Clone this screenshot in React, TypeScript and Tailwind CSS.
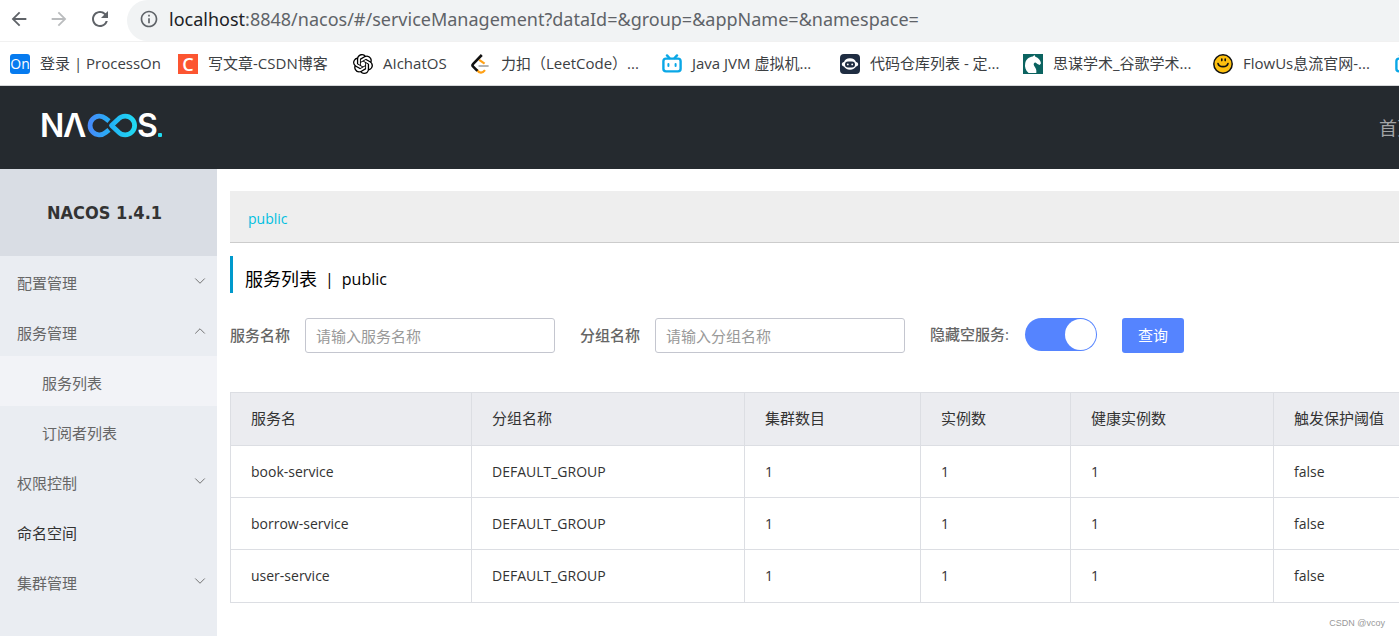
import React, { useState } from 'react';
import { ChevronDown, ChevronUp } from 'lucide-react';
import { MdArrowBack, MdArrowForward, MdRefresh, MdInfoOutline } from 'react-icons/md';
import { SiOpenai } from 'react-icons/si';

interface Service {
	name: string;
	groupName: string;
	clusterCount: number;
	ipCount: number;
	healthyInstanceCount: number;
	triggerFlag: string;
}

interface MenuItem {
	label: string;
	open?: boolean;
	link?: boolean;
	children?: string[];
}

const services: Service[] = [
	{ name: 'book-service', groupName: 'DEFAULT_GROUP', clusterCount: 1, ipCount: 1, healthyInstanceCount: 1, triggerFlag: 'false' },
	{ name: 'borrow-service', groupName: 'DEFAULT_GROUP', clusterCount: 1, ipCount: 1, healthyInstanceCount: 1, triggerFlag: 'false' },
	{ name: 'user-service', groupName: 'DEFAULT_GROUP', clusterCount: 1, ipCount: 1, healthyInstanceCount: 1, triggerFlag: 'false' }
];

const menu: MenuItem[] = [
	{ label: '配置管理' },
	{ label: '服务管理', open: true, children: ['服务列表', '订阅者列表'] },
	{ label: '权限控制' },
	{ label: '命名空间', link: true },
	{ label: '集群管理' }
];

const columns = [
	{ title: '服务名', width: 'w-[241px]' },
	{ title: '分组名称', width: 'w-[273px]' },
	{ title: '集群数目', width: 'w-[176px]' },
	{ title: '实例数', width: 'w-[150px]' },
	{ title: '健康实例数', width: 'w-[203px]' },
	{ title: '触发保护阈值', width: 'w-[240px]' }
];

const BilibiliIcon = () => (
	<svg viewBox="0 0 20 20" className="size-5 shrink-0" fill="none" stroke="#0aa7e6" strokeWidth="2.4" strokeLinecap="round">
		<rect x="1.4" y="4.6" width="17.2" height="12.8" rx="2.6" />
		<path d="M5 1.4l2.4 2.6M15 1.400l-2.400 2.600" />
		<path d="M6.4 10v2M13.6 10v2" strokeWidth="2" />
	</svg>
);

const LeetCodeIcon = () => (
	<svg viewBox="0 0 20 20" className="size-5 shrink-0" fill="none" strokeWidth="2.2">
		<path d="M8.200 5.800L13.600 9.600" stroke="#ffa116" />
		<path d="M5.800 15.600c2.400 4 5.600 4 8.200.6" stroke="#ffa116" />
		<path d="M8.400 12h8.400" stroke="#b3b3b3" strokeLinecap="round" />
		<path d="M10.800 1L2.200 9.800c-.9.900-.9 2 0 2.900l4.200 4.200" stroke="#111" strokeWidth="2.600" />
	</svg>
);

const RobotIcon = () => (
	<svg viewBox="0 0 20 20" className="size-5 shrink-0">
		<rect width="20" height="20" rx="4" fill="#1f2d42" />
		<path d="M10 4.200c3.200 0 5.300 1.500 6 3.700 1.300.3 2.200 1.200 2.200 2.300s-.9 2.100-2.200 2.400c-1 2-3.200 3.200-6 3.200s-5-1.200-6-3.200c-1.300-.3-2.200-1.300-2.200-2.400s.9-2 2.200-2.300c.7-2.200 2.800-3.700 6-3.700z" fill="#fff" />
		<rect x="5" y="7.600" width="10" height="6" rx="3" fill="#1f2d42" />
		<circle cx="7.800" cy="10.400" r=".9" fill="#fff" />
		<circle cx="12.200" cy="10.400" r=".9" fill="#fff" />
	</svg>
);

const HorseIcon = () => (
	<svg viewBox="0 0 20 20" className="size-5 shrink-0">
		<rect width="20" height="20" fill="#0b6360" />
		<path d="M11.400 1l1 1.700c3 .9 5 3.400 5.600 6.600l-1.300 1.700-2.200-.9-2-1.600c-1.600.2-2.300 1.700-1.400 3.200 1.600 2.300 2.700 4 2.200 7.300H5.600C2.600 16.500 1.400 12.800 2.200 9.200 3.100 5.400 6 2.900 9.800 2.500z" fill="#fff" />
	</svg>
);

const SmileIcon = () => (
	<svg viewBox="0 0 20 20" className="size-5 shrink-0" fill="none" stroke="#111" strokeLinecap="round">
		<circle cx="10" cy="10" r="9.200" fill="#fdc00f" strokeWidth="1.500" />
		<path d="M5 9.500c1 4.200 9 4.200 10 0" strokeWidth="1.600" />
		<path d="M8.800 5v1.600M12.200 5v1.600" strokeWidth="1.600" />
	</svg>
);

const ProcessOnIcon = () => (
	<span className="flex size-5 shrink-0 items-center justify-center rounded-[3px] bg-[#067bef] text-sm font-medium text-white">On</span>
);

const CsdnIcon = () => (
	<span className="flex size-5 shrink-0 items-center justify-center bg-[#fc5531] text-lg font-semibold text-white">C</span>
);

const bookmarks = [
	{ title: '登录 | ProcessOn', width: 'w-[148px]', icon: <ProcessOnIcon /> },
	{ title: '写文章-CSDN博客', width: 'w-[155px]', icon: <CsdnIcon /> },
	{ title: 'AIchatOS', width: 'w-[98px]', icon: <SiOpenai className="size-5 shrink-0 text-black" /> },
	{ title: '力扣（LeetCode）...', width: 'w-[171px]', icon: <LeetCodeIcon /> },
	{ title: 'Java JVM 虚拟机...', width: 'w-[158px]', icon: <BilibiliIcon /> },
	{ title: '代码仓库列表 - 定...', width: 'w-[163px]', icon: <RobotIcon /> },
	{ title: '思谋学术_谷歌学术...', width: 'w-[170px]', icon: <HorseIcon /> },
	{ title: 'FlowUs息流官网-...', width: 'w-[162px]', icon: <SmileIcon /> },
	{ title: '', width: 'w-5', icon: <BilibiliIcon /> }
];

const NacosLogo = () => (
	<svg width="134" height="50" viewBox="-6 -11 134 50" role="img" aria-label="NACOS">
		<defs>
			<linearGradient id="loop" gradientUnits="userSpaceOnUse" x1="45" y1="0" x2="95" y2="0">
				<stop offset="0" stopColor="#4a86fb" />
				<stop offset="0.5" stopColor="#22b4f5" />
				<stop offset="1" stopColor="#20dcf2" />
			</linearGradient>
		</defs>
		<g fill="#fff" fontFamily="Inter, sans-serif" fontSize="32" fontWeight="600">
			<text x="-2" y="23">N</text>
			<text x="21" y="23">Λ</text>
			<text x="95" y="23">S</text>
		</g>
		<g fill="none" stroke="url(#loop)" strokeWidth="4.800">
			<path d="M67 7.200L63.500 4.300A9.400 9.400 0 1 0 63.500 18.700L67 15.800" />
			<path d="M69.500 11.500L76.500 4.900A9.400 9.400 0 1 1 76.500 18.100Z" strokeLinejoin="round" />
		</g>
		<rect x="116" y="19" width="4" height="4" rx="1" fill="#20dcf2" />
	</svg>
);

const BrowserBar = () => (
	<div className="overflow-hidden border-b border-[#d5d7d9] bg-white text-[#3c4043]">
		<div className="flex h-[42px] items-start border-b border-[#f1f1f1]">
			<div className="flex h-[38px] w-[127px] shrink-0 items-center gap-[18px] pl-2">
				<button type="button" aria-label="Back"><MdArrowBack className="size-[22px] text-[#5f6368]" /></button>
				<button type="button" aria-label="Forward"><MdArrowForward className="size-[22px] text-[#babcbe]" /></button>
				<button type="button" aria-label="Reload"><MdRefresh className="size-6 text-[#5f6368]" /></button>
			</div>
			<div className="flex h-[41px] flex-1 items-center gap-2.5 rounded-l-full bg-[#f1f3f4] pb-[3px] pl-3 text-lg whitespace-nowrap">
				<MdInfoOutline className="size-5 shrink-0 text-[#5f6368]" />
				<span className="font-['Noto_Sans',sans-serif] text-[#5f6368]">
					<span className="text-[#202124]">localhost</span>:8848/nacos/#/serviceManagement?dataId=&amp;group=&amp;appName=&amp;namespace=
				</span>
			</div>
		</div>
		<nav className="flex h-[43px] items-center gap-5 pl-2.5 text-[15px] whitespace-nowrap">
			{bookmarks.map((item, i) => (
				<a key={i} href="#" className={`flex shrink-0 items-center gap-2.5 ${item.width}`}>
					{item.icon}
					<span>{item.title}</span>
				</a>
			))}
		</nav>
	</div>
);

const Sidebar = () => (
	<aside className="w-[217px] shrink-0 bg-[#eaedf2] text-[15px] text-[#666]">
		<h1 className="flex h-[87px] items-center justify-center bg-[#d9dde4] pr-2 font-['DejaVu_Sans_Condensed','DejaVu_Sans',sans-serif] text-lg font-bold text-[#333]">NACOS 1.4.1</h1>
		<ul className="leading-[54px]">
			{menu.map((item) => (
				<li key={item.label}>
					{item.link ? (
						<a href="#" className="block h-[50px] pl-[17px] text-[#333]">{item.label}</a>
					) : (
						<button type="button" className="flex h-[50px] w-full items-start justify-between pr-2 pl-[17px]">
							<span>{item.label}</span>
							{item.open ? <ChevronUp className="mt-4 size-[18px]" strokeWidth={1.2} /> : <ChevronDown className="mt-4 size-[18px]" strokeWidth={1.2} />}
						</button>
					)}
					{item.children && (
						<ul>
							{item.children.map((child, i) => (
								<li key={child}>
									<a href="#" className={`block h-[50px] pl-[42px] ${i === 0 ? 'bg-[#f2f3f7]' : ''}`}>{child}</a>
								</li>
							))}
						</ul>
					)}
				</li>
			))}
		</ul>
	</aside>
);

const App = () => {
	const [serviceName, setServiceName] = useState('');
	const [groupName, setGroupName] = useState('');
	const [hideEmpty, setHideEmpty] = useState(true);

	return (
		<div className="relative flex min-h-screen flex-col overflow-hidden bg-white font-['Open_Sans','Noto_Sans_CJK_SC',sans-serif]">
			<BrowserBar />

			<header className="flex h-[83px] items-center justify-between bg-[#252a2f] pl-9">
				<NacosLogo />
				<nav className="w-5 overflow-hidden text-lg whitespace-nowrap text-[#a3a5a7]">
					<a href="#">首页</a>
				</nav>
			</header>

			<div className="flex flex-1">
				<Sidebar />
				<main className="min-w-0 flex-1 overflow-hidden pt-[22px] pl-[13px]">
					<div className="flex h-[52px] items-center border-b border-[#ccc] bg-[#eee] pt-1 pl-[18px] text-sm text-[#00bfe0]">
						<a href="#">public</a>
					</div>

					<h2 className="mt-[13px] flex h-[37px] items-center gap-2 border-l-3 border-[#09c] pt-2 pl-3 text-base whitespace-nowrap text-black">
						<span className="text-lg">服务列表</span>
						<span>|</span>
						<span>public</span>
					</h2>

					{/* Search form */}
					<form onSubmit={(e) => e.preventDefault()} className="mt-[25px] flex items-center gap-[25px] text-[15px] whitespace-nowrap text-[#666]">
						<div className="flex items-center gap-[15px]">
							<label htmlFor="serviceName" className="font-medium">服务名称</label>
							<input
								id="serviceName"
								type="text"
								value={serviceName}
								onChange={(e) => setServiceName(e.target.value)}
								placeholder="请输入服务名称"
								className="h-[35px] w-[250px] rounded-[3px] border border-[#c4c6cf] px-2.5 placeholder:text-[#999]"
							/>
						</div>
						<div className="flex items-center gap-[15px]">
							<label htmlFor="groupName" className="font-medium">分组名称</label>
							<input
								id="groupName"
								type="text"
								value={groupName}
								onChange={(e) => setGroupName(e.target.value)}
								placeholder="请输入分组名称"
								className="h-[35px] w-[250px] rounded-[3px] border border-[#c4c6cf] px-2.5 placeholder:text-[#999]"
							/>
						</div>
						<div className="flex items-center gap-4 self-start">
							<label htmlFor="hideEmpty" className="font-medium">隐藏空服务:</label>
							<input
								id="hideEmpty"
								type="checkbox"
								role="switch"
								checked={hideEmpty}
								onChange={(e) => setHideEmpty(e.target.checked)}
								className="flex h-[33px] w-[72px] appearance-none justify-start rounded-full bg-[#c4c6cf] p-px before:size-[31px] before:rounded-full before:bg-white checked:justify-end checked:bg-[#5584ff]"
							/>
						</div>
						<button type="submit" className="h-[35px] rounded-[3px] bg-[#5584ff] px-4 text-white">查询</button>
					</form>

					<table className="mt-[39px] w-[1283px] table-fixed border-collapse border border-[#dcdee3] text-left text-[#333]">
						<thead>
							<tr className="h-[53px] bg-[#ebecf0] text-[15px]">
								{columns.map((col) => (
									<th key={col.title} className={`border border-[#dcdee3] px-5 pb-0.5 font-normal ${col.width}`}>{col.title}</th>
								))}
							</tr>
						</thead>
						<tbody className="text-sm">
							{services.map((service) => (
								<tr key={service.name} className="h-[52px] last:h-[53px]">
									<td className="border border-[#dcdee3] px-5">{service.name}</td>
									<td className="border border-[#dcdee3] px-5">{service.groupName}</td>
									<td className="border border-[#dcdee3] px-5">{service.clusterCount}</td>
									<td className="border border-[#dcdee3] px-5">{service.ipCount}</td>
									<td className="border border-[#dcdee3] px-5">{service.healthyInstanceCount}</td>
									<td className="border border-[#dcdee3] px-5">{service.triggerFlag}</td>
								</tr>
							))}
						</tbody>
					</table>
				</main>
			</div>

			<span className="absolute right-3.5 bottom-1.5 font-['Liberation_Sans',sans-serif] text-[9px] text-[#999]">CSDN @vcoy</span>
		</div>
	);
};

export default App;
